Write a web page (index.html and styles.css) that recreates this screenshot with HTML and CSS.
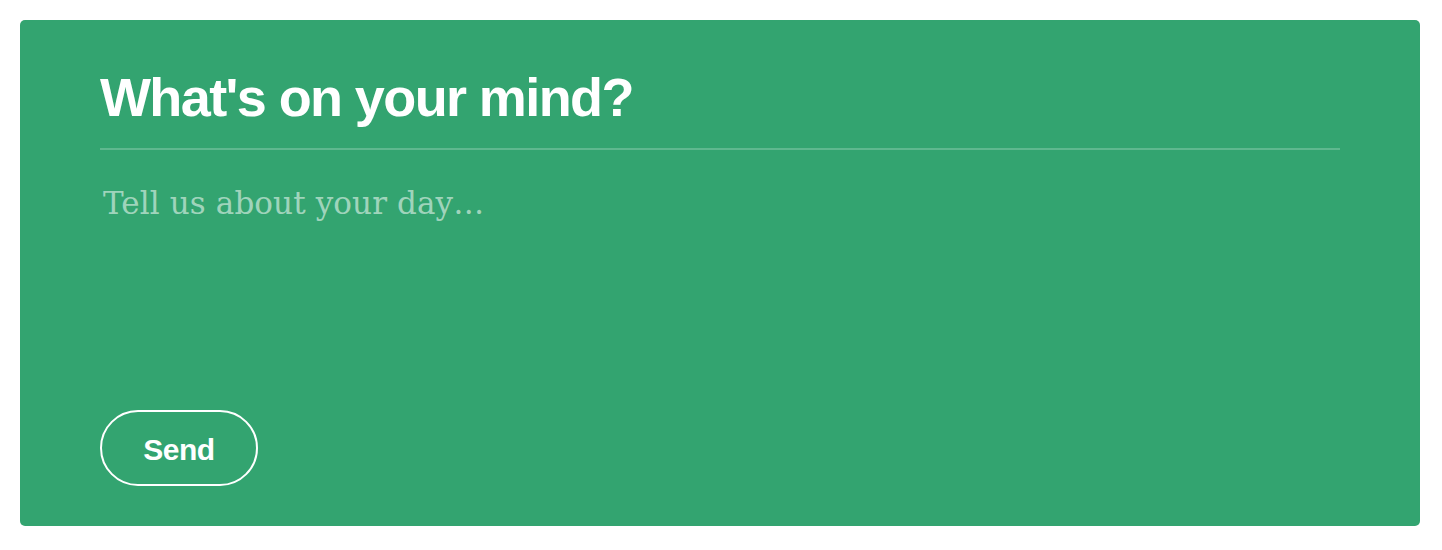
FILE: index.html
```html
<!DOCTYPE html>
<html lang="en">
<head>
<meta charset="utf-8">
<title>What's on your mind?</title>
<link rel="stylesheet" href="styles.css">
</head>
<body>
<form class="card">
  <h1 class="title">What's on your mind?</h1>
  <hr class="divider">
  <textarea class="entry" placeholder="Tell us about your day…"></textarea>
  <div class="actions">
    <button type="button" class="send">Send</button>
  </div>
</form>
</body>
</html>
```

FILE: styles.css
```css
html, body {
  margin: 0;
  padding: 0;
  background: #ffffff;
}
body {
  padding: 20px;
  font-family: "Liberation Sans", Arial, sans-serif;
}
.card {
  box-sizing: border-box;
  width: 1400px;
  height: 506px;
  background: #33a470;
  border-radius: 5px;
  padding: 44px 80px 40px;
  display: flex;
  flex-direction: column;
}
.title {
  margin: 0;
  color: #ffffff;
  font-size: 54px;
  line-height: 67px;
  font-weight: 700;
  letter-spacing: -1.6px;
}
.divider {
  margin: 17px 0 0;
  border: 0;
  height: 2px;
  background: rgba(255, 255, 255, 0.22);
}
.entry {
  margin: 33px 0 0;
  padding: 0 3px;
  flex: 1;
  border: 0;
  outline: none;
  resize: none;
  background: transparent;
  color: #ffffff;
  font-family: "DejaVu Serif", "Liberation Serif", serif;
  font-size: 31px;
  line-height: 40px;
  letter-spacing: 0.1px;
}
.entry::placeholder {
  color: rgba(255, 255, 255, 0.55);
}
.actions {
  display: flex;
  margin-top: 22px;
}
.send {
  box-sizing: border-box;
  width: 158px;
  height: 76px;
  border: 2px solid #ffffff;
  border-radius: 38px;
  background: transparent;
  color: #ffffff;
  font-family: "Liberation Sans", Arial, sans-serif;
  font-size: 30px;
  font-weight: 700;
  letter-spacing: -0.5px;
  padding: 3px 0 0;
  cursor: pointer;
}
```
